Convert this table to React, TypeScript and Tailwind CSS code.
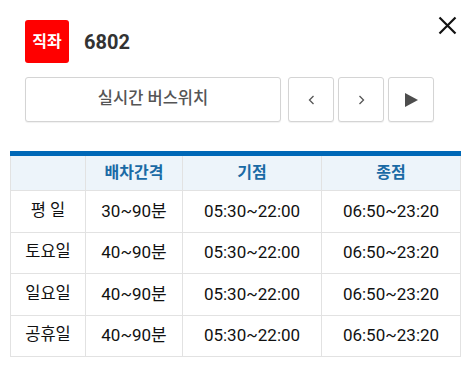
const rows = [
  { day: "평 일", interval: "30~90분", start: "05:30~22:00", end: "06:50~23:20" },
  { day: "토요일", interval: "40~90분", start: "05:30~22:00", end: "06:50~23:20" },
  { day: "일요일", interval: "40~90분", start: "05:30~22:00", end: "06:50~23:20" },
  { day: "공휴일", interval: "40~90분", start: "05:30~22:00", end: "06:50~23:20" },
];

const navBtn =
  "w-[46px] h-[45px] flex items-center justify-center border border-[#d4d4d4] rounded-[3px] bg-white shadow-[0_1px_1px_rgba(0,0,0,0.06)]";

export default function App() {
  return (
    <div
      className="w-[468px] h-[368px] bg-white relative overflow-hidden"
      style={{ fontFamily: "Roboto, 'Noto Sans CJK KR', sans-serif" }}
    >
      <button className="absolute left-[437px] top-[15px] w-[20px] h-[20px] flex items-center justify-center">
        <svg width="19" height="19" viewBox="0 0 19 19">
          <path d="M1.5 1.5 L17.5 17.5 M17.5 1.5 L1.5 17.5" stroke="#111" strokeWidth="2.2" />
        </svg>
      </button>

      <div className="flex items-center pl-[25px] pt-[20px] gap-[15px]">
        <span className="w-[44px] h-[43px] bg-[#ff0000] rounded-[3px] flex items-center justify-center text-white text-[16px] font-bold">
          직좌
        </span>
        <span className="text-[20px] font-bold text-[#333]">6802</span>
      </div>

      <div className="flex items-center pl-[25px] mt-[14px]">
        <button className="w-[256px] h-[45px] border border-[#d4d4d4] rounded-[3px] bg-white text-[16.5px] font-medium text-[#555] shadow-[0_1px_1px_rgba(0,0,0,0.06)]">
          실시간 버스위치
        </button>
        <div className="flex ml-[7px] gap-[4px]">
          <button className={navBtn}>
            <svg width="7" height="10" viewBox="0 0 7 10">
              <path d="M5.5 1 L1.5 5 L5.5 9" stroke="#555" strokeWidth="1.3" fill="none" />
            </svg>
          </button>
          <button className={navBtn}>
            <svg width="7" height="10" viewBox="0 0 7 10">
              <path d="M1.5 1 L5.5 5 L1.5 9" stroke="#555" strokeWidth="1.3" fill="none" />
            </svg>
          </button>
          <button className={navBtn}>
            <svg width="14" height="14" viewBox="0 0 14 14">
              <path d="M1 0 L14 7 L1 14 Z" fill="#4d4d4d" />
            </svg>
          </button>
        </div>
      </div>

      <table className="ml-[10px] mt-[29px] w-[451px] border-collapse border-t-[5px] border-t-[#0068b7] text-[17px] text-[#111]">
        <thead>
          <tr className="bg-[#edf4fa] h-[37px]">
            <th className="w-[75px] border border-[#e2e2e2] border-t-0"></th>
            <th className="w-[97px] border border-[#e2e2e2] border-t-0 text-[16px] font-bold text-[#1a6aa5]">배차간격</th>
            <th className="w-[139px] border border-[#e2e2e2] border-t-0 text-[16px] font-bold text-[#1a6aa5]">기점</th>
            <th className="border border-[#e2e2e2] border-t-0 text-[16px] font-bold text-[#1a6aa5]">종점</th>
          </tr>
        </thead>
        <tbody>
          {rows.map((r) => (
            <tr key={r.day} className="h-[41.5px]">
              <td className="border border-[#e2e2e2] text-center text-[16.5px]">{r.day}</td>
              <td className="border border-[#e2e2e2] text-center">{r.interval}</td>
              <td className="border border-[#e2e2e2] text-center">{r.start}</td>
              <td className="border border-[#e2e2e2] text-center">{r.end}</td>
            </tr>
          ))}
        </tbody>
      </table>
    </div>
  );
}
